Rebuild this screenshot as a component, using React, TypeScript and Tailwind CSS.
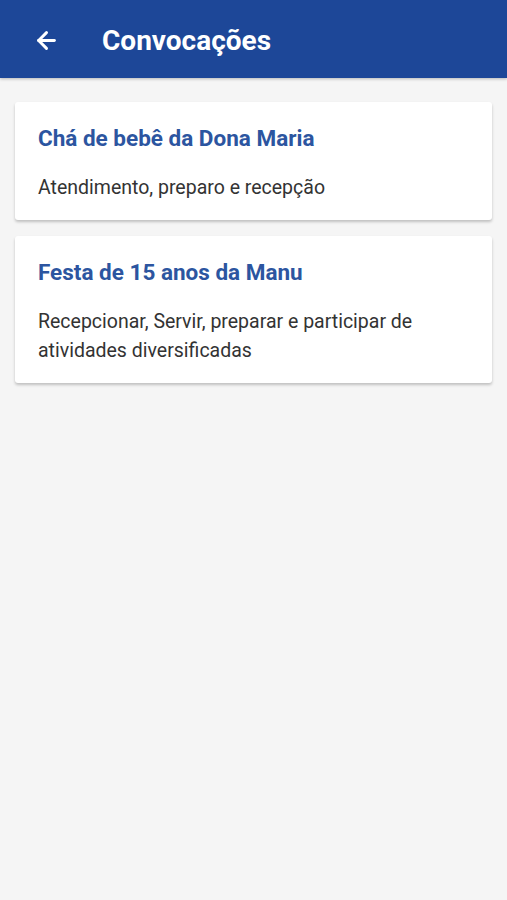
import { ArrowLeft } from 'lucide-react';

const convocacoes = [
  { title: "Chá de bebê da Dona Maria", description: "Atendimento, preparo e recepção" },
  { title: "Festa de 15 anos da Manu", description: "Recepcionar, Servir, preparar e participar de atividades diversificadas" },
];

export default function App() {
  return (
    <div className="min-h-[900px] bg-[#f5f5f5] font-['Roboto',sans-serif]">
      <header className="h-[78px] bg-[#1d4798] flex items-center pt-[3px] pl-[33px] shadow-[0_1px_3px_rgba(0,0,0,0.25)]">
        <button title="Voltar" className="text-white">
          <ArrowLeft size={27} strokeWidth={2.6} />
        </button>
        <h1 className="ml-[42px] text-white text-[28px] font-bold">Convocações</h1>
      </header>
      <div className="flex flex-col gap-4 px-[15px] pt-6">
        {convocacoes.map(item => (
          <div key={item.title} className="bg-white rounded-[3px] pt-[22px] pb-[18px] pl-[23px] pr-6 shadow-[0_2px_3px_rgba(0,0,0,0.22)]">
            <h2 className="text-[#2c55a0] text-[22.5px] leading-[28px] font-bold">{item.title}</h2>
            <p className="mt-[21px] text-[#333] text-[19.5px] leading-[29px]">{item.description}</p>
          </div>
        ))}
      </div>
    </div>
  )
}
